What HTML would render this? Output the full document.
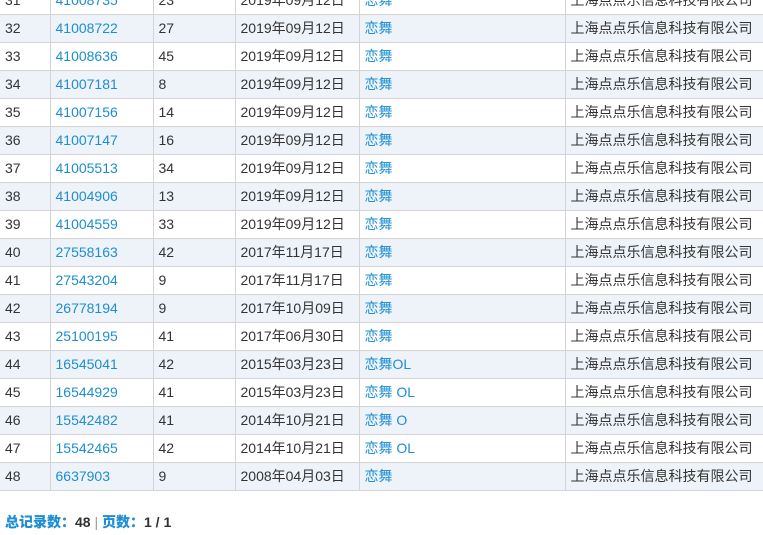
<!DOCTYPE html>
<html><head><meta charset="utf-8"><style>
body{margin:0;width:763px;height:535px;overflow:hidden;background:#fff;font-family:"Liberation Sans","Noto Sans CJK SC",sans-serif;font-size:14px;color:#333;position:relative}
table{position:absolute;left:0;top:-14px;border-collapse:collapse;table-layout:fixed;width:800px}
td{height:27px;padding:0 0 0 5px;border:1px solid #d4d4d4;white-space:nowrap;overflow:hidden;line-height:27px}
tr:nth-child(even) td{background:#eef3f9}
td:first-child{border-left:none}
a{color:#1d8ed1;text-decoration:none}
.f{position:absolute;left:5px;top:512px;font-size:14px;font-weight:bold;color:#333}
.f b{color:#1d8ed1}
.f i{font-style:normal;color:#999;font-weight:normal}
</style></head><body>
<table>
<colgroup><col style="width:50px"><col style="width:103px"><col style="width:82px"><col style="width:124px"><col style="width:206px"><col style="width:235px"></colgroup>
<tr><td>31</td><td><a>41008735</a></td><td>23</td><td>2019年09月12日</td><td><a>恋舞</a></td><td>上海点点乐信息科技有限公司</td></tr>
<tr><td>32</td><td><a>41008722</a></td><td>27</td><td>2019年09月12日</td><td><a>恋舞</a></td><td>上海点点乐信息科技有限公司</td></tr>
<tr><td>33</td><td><a>41008636</a></td><td>45</td><td>2019年09月12日</td><td><a>恋舞</a></td><td>上海点点乐信息科技有限公司</td></tr>
<tr><td>34</td><td><a>41007181</a></td><td>8</td><td>2019年09月12日</td><td><a>恋舞</a></td><td>上海点点乐信息科技有限公司</td></tr>
<tr><td>35</td><td><a>41007156</a></td><td>14</td><td>2019年09月12日</td><td><a>恋舞</a></td><td>上海点点乐信息科技有限公司</td></tr>
<tr><td>36</td><td><a>41007147</a></td><td>16</td><td>2019年09月12日</td><td><a>恋舞</a></td><td>上海点点乐信息科技有限公司</td></tr>
<tr><td>37</td><td><a>41005513</a></td><td>34</td><td>2019年09月12日</td><td><a>恋舞</a></td><td>上海点点乐信息科技有限公司</td></tr>
<tr><td>38</td><td><a>41004906</a></td><td>13</td><td>2019年09月12日</td><td><a>恋舞</a></td><td>上海点点乐信息科技有限公司</td></tr>
<tr><td>39</td><td><a>41004559</a></td><td>33</td><td>2019年09月12日</td><td><a>恋舞</a></td><td>上海点点乐信息科技有限公司</td></tr>
<tr><td>40</td><td><a>27558163</a></td><td>42</td><td>2017年11月17日</td><td><a>恋舞</a></td><td>上海点点乐信息科技有限公司</td></tr>
<tr><td>41</td><td><a>27543204</a></td><td>9</td><td>2017年11月17日</td><td><a>恋舞</a></td><td>上海点点乐信息科技有限公司</td></tr>
<tr><td>42</td><td><a>26778194</a></td><td>9</td><td>2017年10月09日</td><td><a>恋舞</a></td><td>上海点点乐信息科技有限公司</td></tr>
<tr><td>43</td><td><a>25100195</a></td><td>41</td><td>2017年06月30日</td><td><a>恋舞</a></td><td>上海点点乐信息科技有限公司</td></tr>
<tr><td>44</td><td><a>16545041</a></td><td>42</td><td>2015年03月23日</td><td><a>恋舞OL</a></td><td>上海点点乐信息科技有限公司</td></tr>
<tr><td>45</td><td><a>16544929</a></td><td>41</td><td>2015年03月23日</td><td><a>恋舞 OL</a></td><td>上海点点乐信息科技有限公司</td></tr>
<tr><td>46</td><td><a>15542482</a></td><td>41</td><td>2014年10月21日</td><td><a>恋舞 O</a></td><td>上海点点乐信息科技有限公司</td></tr>
<tr><td>47</td><td><a>15542465</a></td><td>42</td><td>2014年10月21日</td><td><a>恋舞 OL</a></td><td>上海点点乐信息科技有限公司</td></tr>
<tr><td>48</td><td><a>6637903</a></td><td>9</td><td>2008年04月03日</td><td><a>恋舞</a></td><td>上海点点乐信息科技有限公司</td></tr>
</table>
<div class="f"><b>总记录数：</b>48 <i>|</i> <b>页数：</b>1 / 1</div>
</body></html>
